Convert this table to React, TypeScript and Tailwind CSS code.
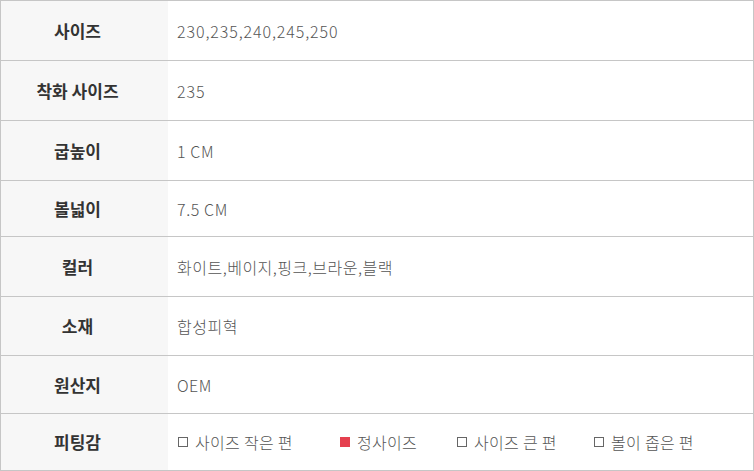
const rows: { label: string; value: string; h: string; track: string }[] = [
  { label: '사이즈', value: '230,235,240,245,250', h: 'h-[60px]', track: 'tracking-[0.9px]' },
  { label: '착화 사이즈', value: '235', h: 'h-[60px]', track: 'tracking-[0.9px]' },
  { label: '굽높이', value: '1 CM', h: 'h-[60px]', track: 'tracking-[0.6px]' },
  { label: '볼넓이', value: '7.5 CM', h: 'h-[56px]', track: 'tracking-[0.6px]' },
  { label: '컬러', value: '화이트,베이지,핑크,브라운,블랙', h: 'h-[60px]', track: 'tracking-[0.5px]' },
  { label: '소재', value: '합성피혁', h: 'h-[59px]', track: 'tracking-[0.5px]' },
  { label: '원산지', value: 'OEM', h: 'h-[58px]', track: 'tracking-[0.5px]' },
];

const fits = [
  { text: '사이즈 작은 편', on: false, w: 'w-[162px]' },
  { text: '정사이즈', on: true, w: 'w-[117px]' },
  { text: '사이즈 큰 편', on: false, w: 'w-[137px]' },
  { text: '볼이 좁은 편', on: false, w: '' },
];

function Label({ children }: { children: React.ReactNode }) {
  return (
    <div className="w-[167px] shrink-0 h-full flex items-center justify-center pr-[14px] bg-[#f7f7f7] text-[17px] font-bold text-[#333]">
      {children}
    </div>
  );
}

export default function App() {
  return (
    <div
      className="w-[754px] h-[471px] bg-white border-t border-x border-[#c6c6c6]"
      style={{ fontFamily: '"Noto Sans CJK KR", "Noto Sans", sans-serif' }}
    >
      {rows.map((r) => (
        <div key={r.label} className={`${r.h} flex items-center border-b border-[#c6c6c6]`}>
          <Label>{r.label}</Label>
          <div className={`pl-[9px] text-[16px] font-light text-[#555] ${r.track}`}>{r.value}</div>
        </div>
      ))}
      <div className="h-[57px] flex items-center border-b border-[#c6c6c6]">
        <Label>피팅감</Label>
        <div className="flex items-center pl-[10px] text-[16px] font-light text-[#555] tracking-[0.3px]">
          {fits.map((f) => (
            <div key={f.text} className={`${f.w} flex items-center`}>
              <span
                className={`w-[10px] h-[10px] mr-[7px] ${
                  f.on ? 'bg-[#e5404f]' : 'border border-[#666]'
                }`}
              />
              <span>{f.text}</span>
            </div>
          ))}
        </div>
      </div>
    </div>
  );
}
